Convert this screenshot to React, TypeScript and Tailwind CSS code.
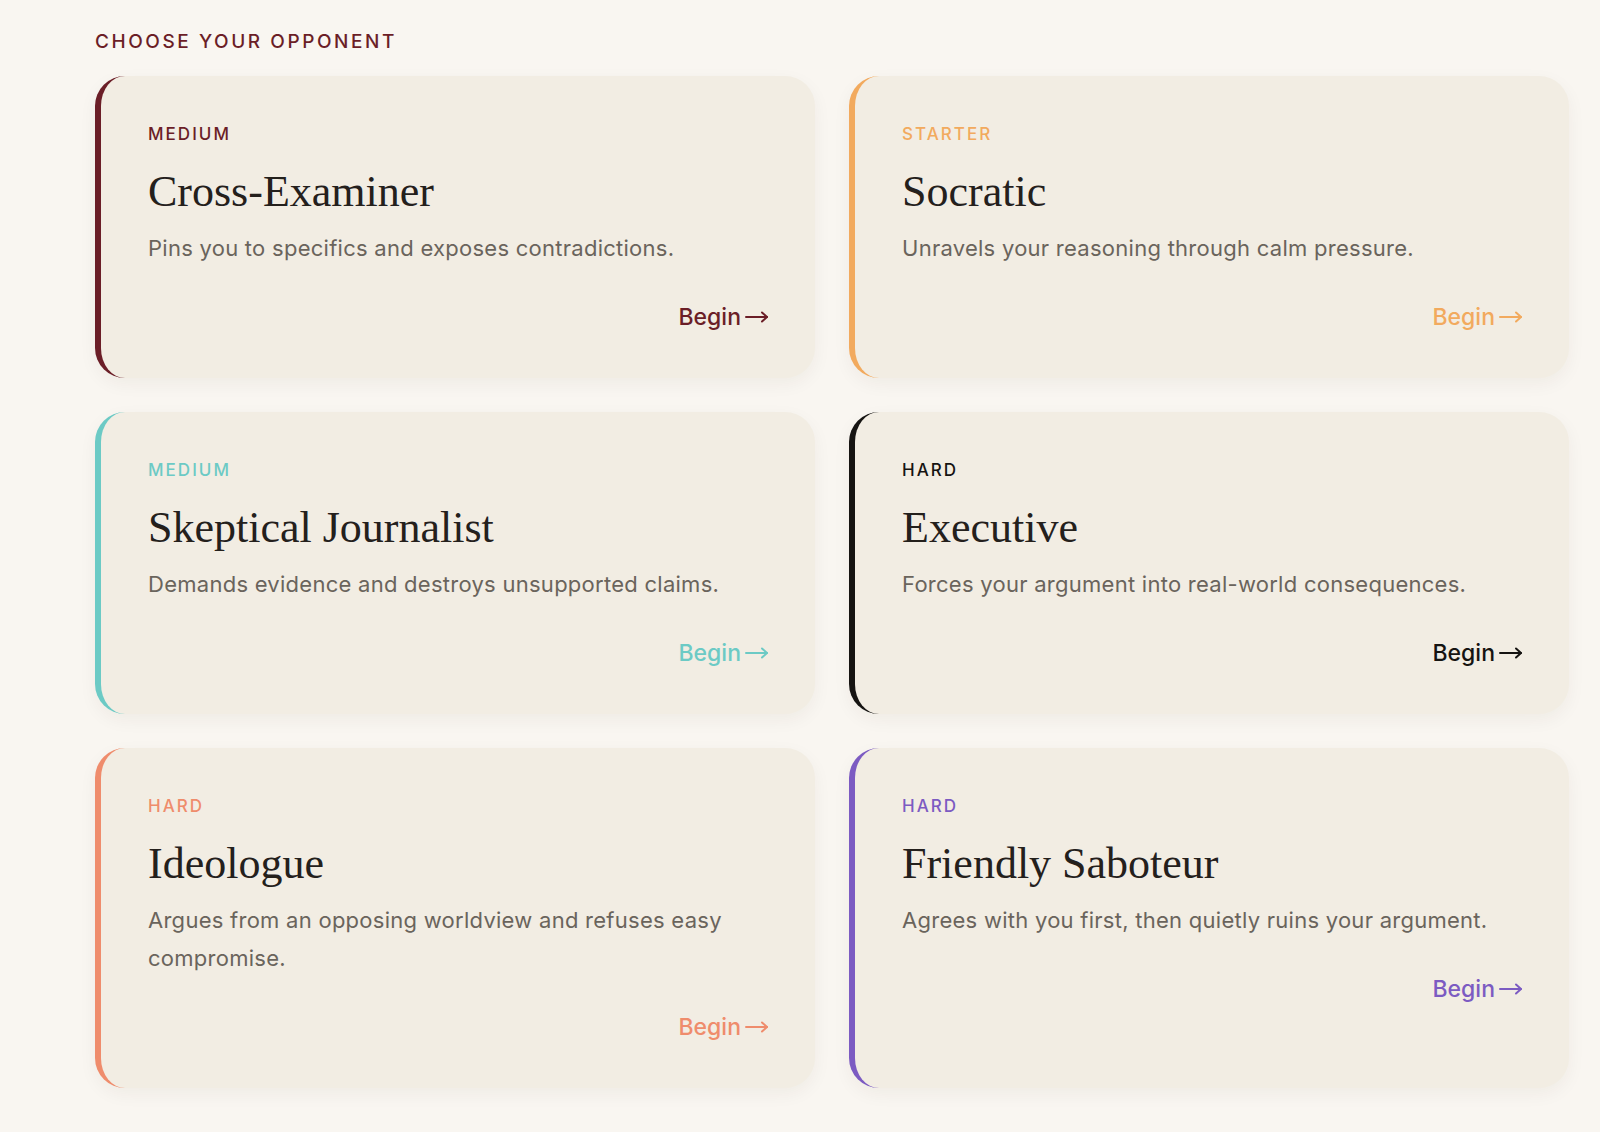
import React from "react";

interface Opponent {
  level: string;
  name: string;
  desc: string;
  border: string;
  text: string;
}

const opponents: Opponent[] = [
  {
    level: "MEDIUM",
    name: "Cross-Examiner",
    desc: "Pins you to specifics and exposes contradictions.",
    border: "border-[#6b1e27]",
    text: "text-[#6b1e27]",
  },
  {
    level: "STARTER",
    name: "Socratic",
    desc: "Unravels your reasoning through calm pressure.",
    border: "border-[#f2aa5e]",
    text: "text-[#f2aa5e]",
  },
  {
    level: "MEDIUM",
    name: "Skeptical Journalist",
    desc: "Demands evidence and destroys unsupported claims.",
    border: "border-[#6ccac5]",
    text: "text-[#6ccac5]",
  },
  {
    level: "HARD",
    name: "Executive",
    desc: "Forces your argument into real-world consequences.",
    border: "border-[#161412]",
    text: "text-[#161412]",
  },
  {
    level: "HARD",
    name: "Ideologue",
    desc: "Argues from an opposing worldview and refuses easy compromise.",
    border: "border-[#ef8c6c]",
    text: "text-[#ef8c6c]",
  },
  {
    level: "HARD",
    name: "Friendly Saboteur",
    desc: "Agrees with you first, then quietly ruins your argument.",
    border: "border-[#7c5bc2]",
    text: "text-[#7c5bc2]",
  },
];

const sans = "font-['Inter','Noto_Sans',sans-serif]";

function Arrow() {
  return (
    <svg width="24" height="14" viewBox="0 0 24 14" fill="none" stroke="currentColor" strokeWidth="2" strokeLinecap="round" strokeLinejoin="round">
      <path d="M1 7h21" />
      <path d="M17 2.5 22 7l-5 4.5" />
    </svg>
  );
}

function OpponentCard({ o }: { o: Opponent }) {
  return (
    <div
      className={`flex flex-col rounded-[30px] border-l-[6px] ${o.border} bg-[#f2ede3] pl-[47px] pr-[46px] pt-[46px] pb-[46px] shadow-[0_6px_18px_rgba(60,40,20,0.05)]`}
    >
      <div className={`${sans} text-[17px] leading-6 font-medium tracking-[0.12em] ${o.text}`}>
        {o.level}
      </div>
      <h2 className="mt-[21px] font-['Liberation_Serif',serif] text-[44px] leading-[50px] text-[#24201c]">
        {o.name}
      </h2>
      <p className={`${sans} mt-[12px] text-[22px] leading-[38px] tracking-[0.012em] text-[#6a645c]`}>
        {o.desc}
      </p>
      <div className="mt-[35px] flex justify-end">
        <button className={`${sans} flex items-center gap-[4px] text-[23px] leading-[30px] font-medium ${o.text}`}>
          Begin
          <Arrow />
        </button>
      </div>
    </div>
  );
}

export default function App() {
  return (
    <div className="min-h-screen bg-[#f9f6f1] pl-[95px] pr-[31px] pt-[30px]">
      <h1 className={`${sans} text-[19px] leading-6 font-medium tracking-[0.135em] text-[#6b1e27]`}>
        CHOOSE YOUR OPPONENT
      </h1>
      <div className="mt-[22px] grid grid-cols-2 gap-[34px]">
        {opponents.map((o) => (
          <OpponentCard key={o.name} o={o} />
        ))}
      </div>
    </div>
  );
}
